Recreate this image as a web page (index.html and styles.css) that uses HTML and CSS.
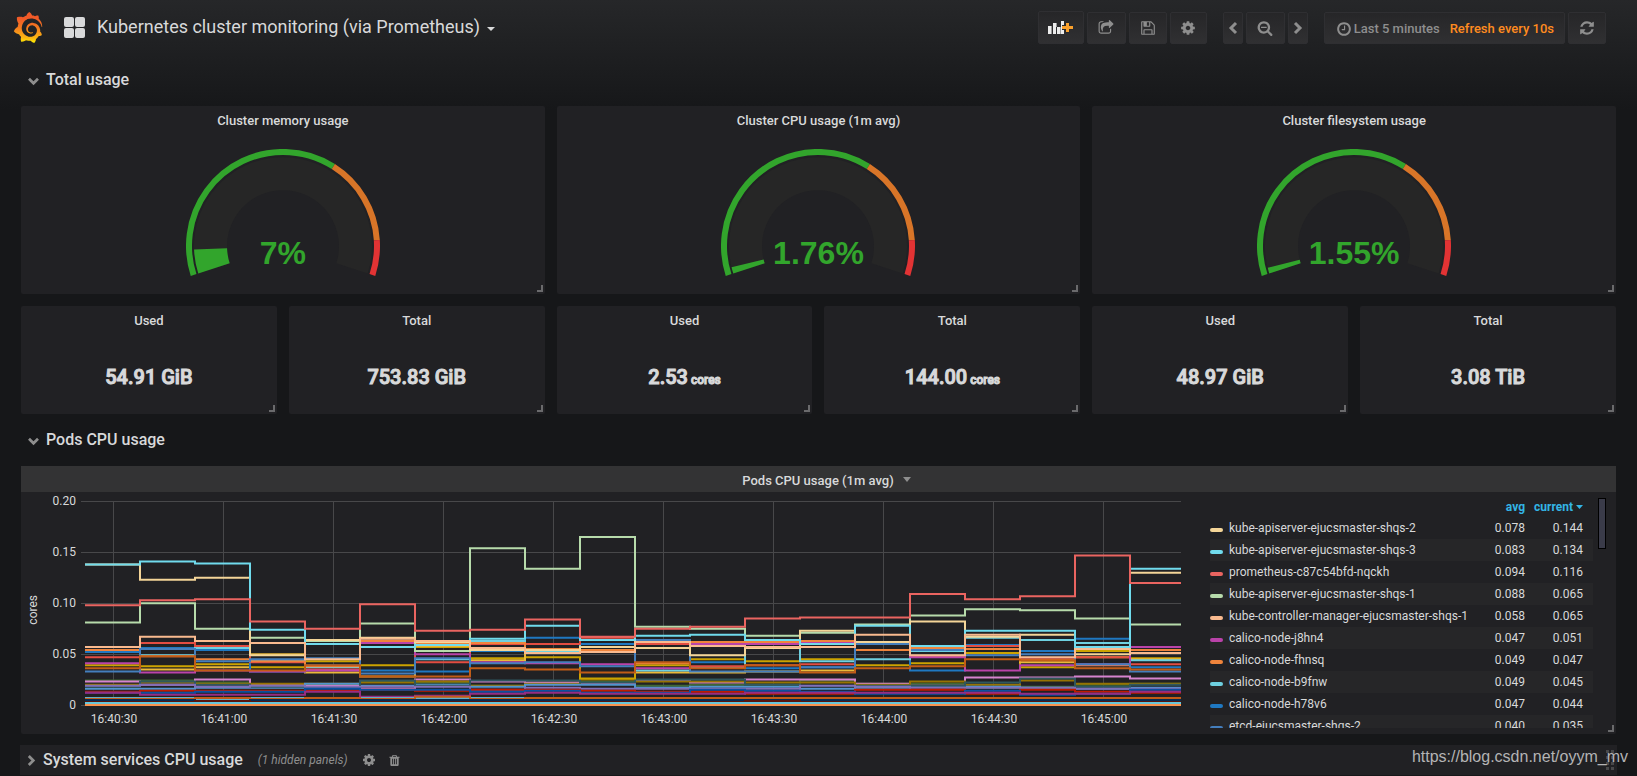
FILE: index.html
```html
<!DOCTYPE html>
<html lang="en">
<head>
<meta charset="utf-8">
<title>Kubernetes cluster monitoring (via Prometheus)</title>
<link rel="stylesheet" href="styles.css">
</head>
<body>
<svg class="sprite" aria-hidden="true">
  <symbol id="cog" viewBox="0 0 1792 1792"><path d="M1152 896q0-106-75-181t-181-75-181 75-75 181 75 181 181 75 181-75 75-181zm512-109v222q0 12-8 23t-20 13l-185 28q-19 54-39 91 35 50 107 138 10 12 10 25t-9 23q-27 37-99 108t-94 71q-12 0-26-9l-138-108q-44 23-91 38-16 136-29 186-7 28-36 28h-222q-14 0-24.5-8.5t-11.5-21.5l-28-184q-49-16-90-37l-141 107q-10 9-25 9-14 0-25-11-126-114-165-168-7-10-7-23 0-12 8-23 15-21 51-66.5t54-70.5q-27-50-41-99l-183-27q-13-2-21-12.5t-8-23.5v-222q0-12 8-23t19-13l186-28q14-46 39-92-40-57-107-138-10-12-10-24 0-10 9-23 26-36 98.5-107.5t94.5-71.5q13 0 26 10l138 107q44-23 91-38 16-136 29-186 7-28 36-28h222q14 0 24.5 8.5t11.5 21.5l28 184q49 16 90 37l142-107q9-9 24-9 13 0 25 10 129 119 165 170 7 8 7 22 0 12-8 23-15 21-51 66.5t-54 70.5q26 50 41 98l183 28q13 2 21 12.5t8 23.5z"/></symbol>
  <symbol id="chevron" viewBox="0 0 10 14"><path d="M2 2l5 5-5 5" fill="none" stroke="currentColor" stroke-width="3"/></symbol>
  <symbol id="handle" viewBox="0 0 6 7"><path d="M4 0h2v7H0V5h4z"/></symbol>
</svg>

<header class="navbar">
  <a class="logo" href="#" aria-label="Grafana home">
    <svg viewBox="0 0 351 365" width="30" height="31">
      <defs><linearGradient id="flame" x1="0" y1="1" x2="0" y2="0"><stop offset="0" stop-color="#fff100"/><stop offset=".15" stop-color="#fbb911"/><stop offset=".5" stop-color="#f47a20"/><stop offset=".8" stop-color="#f05a28"/></linearGradient></defs>
      <path fill="url(#flame)" d="M342,161.2c-0.6-6.1-1.6-13.1-3.6-20.9c-2-7.7-5-16.2-9.4-25c-4.4-8.8-10.1-17.9-17.5-26.8c-2.9-3.5-6.1-6.9-9.5-10.2c5.1-20.3-6.2-37.9-6.2-37.9c-19.5-1.2-31.9,6.1-36.5,9.4c-0.8-0.3-1.5-0.7-2.3-1c-3.3-1.3-6.7-2.6-10.3-3.7c-3.5-1.1-7.1-2.1-10.8-3c-3.7-0.9-7.4-1.6-11.2-2.2c-0.7-0.1-1.3-0.2-2-0.3c-8.5-27.2-32.9-38.6-32.9-38.6c-27.3,17.3-32.4,41.5-32.4,41.5s-0.1,0.5-0.3,1.4c-1.5,0.4-3,0.9-4.5,1.3c-2.1,0.6-4.2,1.4-6.2,2.2c-2.1,0.8-4.1,1.6-6.2,2.5c-4.1,1.8-8.2,3.8-12.2,6c-3.9,2.2-7.7,4.6-11.4,7.1c-0.5-0.2-1-0.4-1-0.4c-37.8-14.4-71.3,2.9-71.3,2.9c-3.1,40.2,15.1,65.5,18.7,70.1c-0.9,2.5-1.7,5-2.5,7.5c-2.8,9.1-4.9,18.4-6.2,28.1c-0.2,1.4-0.4,2.8-0.5,4.2C18.8,192.7,8.5,228,8.5,228c29.1,33.5,63.1,35.6,63.1,35.6c0,0,0.1-0.1,0.1-0.1c4.3,7.7,9.3,15,14.9,21.9c2.4,2.9,4.8,5.6,7.4,8.3c-10.6,30.4,1.5,55.6,1.5,55.6c32.4,1.2,53.7-14.2,58.2-17.7c3.2,1.1,6.5,2.1,9.8,2.9c10,2.6,20.2,4.1,30.4,4.5c2.5,0.1,5.1,0.2,7.6,0.1l1.2,0l0.8,0l1.6,0l1.6-0.1l0,0.1c15.3,21.8,42.1,24.9,42.1,24.9c19.1-20.1,20.2-40.1,20.2-44.4l0,0c0,0,0-0.1,0-0.3c0-0.4,0-0.6,0-0.6l0,0c0-0.3,0-0.6,0-0.9c4-2.8,7.8-5.8,11.4-9.1c7.6-6.9,14.3-14.8,19.9-23.3c0.5-0.8,1-1.6,1.5-2.4c21.6,1.2,36.9-13.4,36.9-13.4c-3.6-22.5-16.4-33.5-19.1-35.6l0,0c0,0-0.1-0.1-0.3-0.2c-0.2-0.1-0.2-0.2-0.2-0.2c-0.1-0.1-0.3-0.2-0.5-0.3c0.1-1.4,0.2-2.7,0.3-4.1c0.2-2.4,0.2-4.9,0.2-7.3l0-1.8l0-0.9l0-0.5l-0.1-2.1l-0.1-2c0-0.7-0.1-1.3-0.2-1.9c-0.1-0.6-0.1-1.3-0.2-1.9l-0.2-1.9l-0.3-1.9c-0.4-2.5-0.8-4.9-1.4-7.4c-2.3-9.7-6.1-18.9-11-27.2c-5-8.3-11.2-15.6-18.3-21.8c-7-6.2-14.9-11.2-23.1-14.9c-8.3-3.7-16.9-6.1-25.5-7.2c-4.3-0.6-8.6-0.8-12.9-0.7l-1.6,0l-1.6,0l-1.6,0.1c-0.6,0-1.2,0.1-1.7,0.1c-2.2,0.2-4.4,0.5-6.5,0.9c-8.6,1.6-16.7,4.7-23.8,9c-7.1,4.3-13.3,9.6-18.3,15.6c-5,6-8.9,12.7-11.6,19.6c-2.7,6.9-4.2,14.1-4.6,21c-0.1,1.7-0.1,3.5-0.1,5.2c0,0.4,0,0.9,0,1.3l0.1,1.4c0.1,0.8,0.1,1.7,0.2,2.5c0.3,3.5,1,6.9,1.9,10.1c1.9,6.5,4.9,12.4,8.6,17.4c3.7,5,8.2,9.1,12.9,12.4c4.7,3.2,9.8,5.5,14.8,7c5,1.5,10,2.1,14.7,2.1c0.6,0,1.2,0,1.7,0c0.3,0,0.6,0,0.9,0c0.3,0,0.6,0,0.9-0.1c0.5,0,1-0.1,1.5-0.1c0.1,0,0.3,0,0.4-0.1l0.5-0.1c0.3,0,0.6-0.1,0.9-0.1c0.6-0.1,1.1-0.2,1.7-0.3c0.6-0.1,1.1-0.2,1.6-0.4c1.1-0.2,2.1-0.6,3.1-0.9c2-0.7,4-1.5,5.7-2.4c1.8-0.9,3.4-2,5-3c0.4-0.3,0.9-0.6,1.3-1c1.6-1.3,1.9-3.7,0.6-5.3c-1.1-1.4-3.1-1.8-4.7-0.9c-0.4,0.2-0.8,0.4-1.2,0.6c-1.4,0.7-2.8,1.3-4.3,1.8c-1.5,0.5-3.1,0.9-4.7,1.2c-0.8,0.1-1.6,0.2-2.5,0.3c-0.4,0-0.8,0.1-1.3,0.1c-0.4,0-0.9,0-1.2,0c-0.4,0-0.8,0-1.2,0c-0.5,0-1,0-1.5-0.1l-0.6,0c-0.2,0-0.5,0-0.7-0.1c-0.5-0.1-0.9-0.1-1.4-0.2c-3.7-0.5-7.4-1.6-10.9-3.2c-3.6-1.6-7-3.8-10.1-6.6c-3.1-2.8-5.8-6.1-7.9-9.9c-2.1-3.8-3.6-8-4.3-12.4c-0.3-2.2-0.5-4.5-0.4-6.7c0-0.6,0.1-1.2,0.1-1.8l0-0.8c0-0.3,0.1-0.6,0.1-0.9c0.1-1.2,0.3-2.4,0.5-3.6c1.7-9.6,6.5-19,13.9-26.1c1.9-1.8,3.9-3.4,6-4.9c2.1-1.5,4.4-2.8,6.8-3.9c2.4-1.1,4.8-2,7.4-2.7c2.5-0.7,5.1-1.1,7.8-1.4c1.3-0.1,2.6-0.2,4-0.2l2.7,0l1.5,0.1c2.9,0.2,5.7,0.6,8.5,1.3c5.6,1.2,11.1,3.3,16.2,6.1c10.2,5.7,18.9,14.5,24.2,25.1c2.7,5.3,4.6,11,5.5,16.9c0.2,1.5,0.4,3,0.5,4.5l0.1,1.1l0.1,1.1c0,0.4,0,0.8,0,1.1c0,0.4,0,0.8,0,1.1l0,1l0,1.1c0,0.7-0.1,1.9-0.1,2.6c-0.1,1.6-0.3,3.3-0.5,4.9c-0.2,1.6-0.5,3.2-0.8,4.8c-0.3,1.6-0.7,3.2-1.1,4.7c-0.8,3.1-1.8,6.2-3,9.3c-2.4,6-5.6,11.8-9.4,17.1c-7.7,10.6-18.2,19.2-30.2,24.7c-6,2.7-12.3,4.7-18.8,5.7c-3.2,0.6-6.5,0.9-9.8,1l-5,0c-1.8,0-3.5-0.1-5.3-0.3c-7-0.5-13.9-1.8-20.7-3.7c-6.7-1.9-13.2-4.6-19.4-7.8c-12.3-6.6-23.4-15.6-32-26.5c-4.3-5.4-8.1-11.3-11.2-17.4c-3.1-6.1-5.6-12.6-7.4-19.1c-1.8-6.6-2.9-13.3-3.4-20.1l-0.1-1.3l0-5.8c0-0.8,0-1.7,0-2.5c0.1-3.3,0.4-6.8,0.8-10.2c0.4-3.4,1-6.9,1.7-10.3c0.7-3.4,1.5-6.8,2.5-10.2c1.9-6.7,4.3-13.2,7.1-19.3c5.7-12.2,13.1-23.1,22-31.8c2.2-2.2,4.5-4.2,6.9-6.2c2.4-1.9,4.9-3.7,7.5-5.4c2.5-1.7,5.2-3.2,7.9-4.6c1.3-0.7,2.7-1.4,4.1-2c1.4-0.6,2.8-1.2,4.2-1.8c2.8-1.2,5.7-2.2,8.7-3.1c1.5-0.5,2.9-0.9,4.4-1.3c1.5-0.4,3-0.8,4.5-1.1c1.5-0.4,3.1-0.7,4.6-1c1.5-0.3,3-0.6,4.6-0.8c0.8-0.1,1.5-0.2,2.3-0.3c1.7-0.2,3.5-0.5,5.2-0.6l3.8-0.4c0.9-0.1,1.7-0.1,2.6-0.2l2.3-0.1c0.7,0,1.5-0.1,2.2-0.1c2.9-0.1,5.9-0.1,8.8,0c5.8,0.2,11.5,0.9,17,1.9c11.1,2.1,21.5,5.6,31,10.3c9.5,4.6,17.9,10.3,25.3,16.5c3.6,3.1,7,6.4,10.2,9.7c3.1,3.3,6,6.6,8.6,10c5.2,6.7,9.4,13.5,12.7,19.9c1.6,3.2,3.1,6.3,4.4,9.4c1.2,3,2.4,5.9,3.3,8.6c1.5,4.4,2.6,8.3,3.5,11.7c0.3,1.4,1.6,2.3,3,2.1c1.5-0.1,2.6-1.3,2.6-2.8C342.6,170.4,342.5,166.1,342,161.2z"/>
    </svg>
  </a>
  <button class="dash-title" type="button">
    <svg width="21" height="21" viewBox="0 0 21 21" fill="#b3b3b3"><rect width="10" height="10" rx="2"/><rect x="11" width="10" height="10" rx="2"/><rect y="11" width="10" height="10" rx="2"/><rect x="11" y="11" width="10" height="10" rx="2"/></svg>
    <span>Kubernetes cluster monitoring (via Prometheus)</span>
    <svg class="caret" width="8" height="4" viewBox="0 0 8 4"><path d="M0 0h8L4 4z"/></svg>
  </button>
  <div class="tools">
    <div class="group">
      <button class="btn btn-add" type="button" aria-label="Add panel">
        <svg width="25" height="13" viewBox="0 0 25 13"><path fill="#ececec" d="M0 5h3v8H0zM5 2h3v11H5zM9 6h3v7H9zM13 0h3v13h-3z"/><path fill="#9b9b9c" d="M3 5h1v8H3zM8 2h1v4H8zM12 6h1v7h-1z"/><path d="M17 1h5v3h3v5h-3v3h-5V9h-3V4h3z" fill="#29292b"/><path d="M18 2h3v3h4v3h-4v3h-3V8h-4V5h4z" fill="#f9a02c"/></svg>
      </button>
      <button class="btn w39" type="button" aria-label="Share"><svg class="fa" viewBox="0 0 1792 1792"><path d="M1472 989v259q0 119-84.500 203.500t-203.500 84.500h-832q-119 0-203.500-84.500t-84.500-203.500v-832q0-119 84.500-203.500t203.500-84.500h255q13 0 22.500 9.500t9.500 22.500q0 27-26 32-77 26-133 60-10 4-16 4h-112q-66 0-113 47t-47 113v832q0 66 47 113t113 47h832q66 0 113-47t47-113v-214q0-19 18-29 28-13 54-37 16-16 35-8 21 9 21 29zm237-496l-384 384q-18 19-45 19-12 0-25-5-39-17-39-59v-192h-160q-323 0-438 131-119 137-74 473 3 23-20 34-8 2-12 2-16 0-26-13-10-14-21-31t-39.500-68.500-49.500-99.500-38.500-114-17.500-122q0-49 3.500-91t14-90 28-88 47-81.500 68.500-74 94.500-61.500 124.500-48.500 159.500-30.500 196.500-11h160v-192q0-42 39-59 13-5 25-5 26 0 45 19l384 384q19 19 19 45t-19 45z"/></svg></button>
      <button class="btn w38" type="button" aria-label="Save"><svg class="fa" viewBox="0 0 1792 1792"><path d="M512 1536h768v-384h-768v384zm896 0h128v-896q0-14-10-38.500t-20-34.500l-281-281q-10-10-34-20t-39-10v416q0 40-28 68t-68 28h-576q-40 0-68-28t-28-68v-416h-128v1280h128v-416q0-40 28-68t68-28h832q40 0 68 28t28 68v416zm-384-928v-320q0-13-9.500-22.500t-22.500-9.500h-192q-13 0-22.500 9.500t-9.500 22.500v320q0 13 9.500 22.500t22.500 9.500h192q13 0 22.500-9.500t9.500-22.500zm640 32v928q0 40-28 68t-68 28h-1344q-40 0-68-28t-28-68v-1344q0-40 28-68t68-28h928q40 0 88 20t76 48l280 280q28 28 48 76t20 88z"/></svg></button>
      <button class="btn w37" type="button" aria-label="Settings"><svg class="fa"><use href="#cog"/></svg></button>
    </div>
    <div class="group">
      <button class="btn w20" type="button" aria-label="Back"><svg class="flip" width="10" height="14"><use href="#chevron"/></svg></button>
      <button class="btn w39" type="button" aria-label="Zoom out"><svg class="fa" viewBox="0 0 1792 1792"><path d="M1088 800v64q0 13-9.500 22.500t-22.500 9.500h-576q-13 0-22.500-9.500t-9.500-22.500v-64q0-13 9.500-22.500t22.500-9.500h576q13 0 22.500 9.500t9.500 22.500zm128 32q0-185-131.500-316.500t-316.500-131.500-316.500 131.500-131.500 316.500 131.500 316.500 316.500 131.500 316.500-131.500 131.500-316.500zm512 832q0 53-37.500 90.500t-90.500 37.500q-54 0-90-38l-343-342q-179 124-399 124-143 0-273.500-55.500t-225-150-150-225-55.500-273.500 55.500-273.500 150-225 225-150 273.500-55.500 273.500 55.500 225 150 150 225 55.500 273.500q0 220-124 399l343 343q37 37 37 90z"/></svg></button>
      <button class="btn w20" type="button" aria-label="Forward"><svg width="10" height="14"><use href="#chevron"/></svg></button>
    </div>
    <div class="group">
      <button class="btn btn-time" type="button"><svg class="fa" viewBox="0 0 1792 1792"><path d="M1024 544v448q0 14-9 23t-23 9h-320q-14 0-23-9t-9-23v-64q0-14 9-23t23-9h224v-352q0-14 9-23t23-9h64q14 0 23 9t9 23zm416 352q0-148-73-273t-198-198-273-73-273 73-198 198-73 273 73 273 198 198 273 73 273-73 198-198 73-273zm224 0q0 209-103 385.500t-279.500 279.500-385.500 103-385.500-103-279.500-279.500-103-385.500 103-385.500 279.500-279.500 385.500-103 385.500 103 279.500 279.500 103 385.500z"/></svg><span>Last 5 minutes</span><span class="refresh">Refresh every 10s</span></button>
      <button class="btn w38" type="button" aria-label="Refresh"><svg class="fa" viewBox="0 0 1792 1792"><path d="M1639 1056q0 5-1 7-64 268-268 434.500t-478 166.500q-146 0-282.500-55t-243.500-157l-129 129q-19 19-45 19t-45-19-19-45v-448q0-26 19-45t45-19h448q26 0 45 19t19 45-19 45l-137 137q71 66 161 102t187 36q134 0 250-65t186-179q11-17 53-117 8-23 30-23h192q13 0 22.500 9.500t9.500 22.500zm25-800v448q0 26-19 45t-45 19h-448q-26 0-45-19t-19-45 19-45l138-138q-148-137-349-137-134 0-250 65t-186 179q-11 17-53 117-8 23-30 23h-199q-13 0-22.500-9.500t-9.500-22.500v-7q65-268 270-434.500t480-166.500q146 0 284 55.500t245 156.500l130-129q19-19 45-19t45 19 19 45z"/></svg></button>
    </div>
  </div>
</header>

<main class="dashboard">
  <h2 class="row-title"><svg class="down" width="9" height="13"><use href="#chevron"/></svg>Total usage</h2>

  <div class="gauges">
    <section class="panel gauge-panel">
      <h3 class="panel-title">Cluster memory usage</h3>
      <div class="gauge">
        <svg viewBox="0 0 194 129" width="194" height="129"><path class="track" d="M28 119.400A72.500 72.500 0 1 1 166 119.400"/><path class="fill" pathLength="100" stroke-dasharray="7.300 100" d="M28 119.400A72.500 72.500 0 1 1 166 119.400"/><path class="ring ok" pathLength="100" stroke-dasharray="65 100" d="M7.600 126A94 94 0 1 1 186.400 126"/><path class="ring warn" pathLength="100" stroke-dasharray="0 65 25 100" d="M7.600 126A94 94 0 1 1 186.400 126"/><path class="ring crit" pathLength="100" stroke-dasharray="0 90 10 100" d="M7.600 126A94 94 0 1 1 186.400 126"/></svg>
        <span class="gauge-value">7%</span>
      </div>
      <svg class="resize"><use href="#handle"/></svg>
    </section>
    <section class="panel gauge-panel">
      <h3 class="panel-title">Cluster CPU usage (1m avg)</h3>
      <div class="gauge">
        <svg viewBox="0 0 194 129" width="194" height="129"><path class="track" d="M28 119.400A72.500 72.500 0 1 1 166 119.400"/><path class="fill" pathLength="100" stroke-dasharray="2 100" d="M28 119.400A72.500 72.500 0 1 1 166 119.400"/><path class="ring ok" pathLength="100" stroke-dasharray="65 100" d="M7.600 126A94 94 0 1 1 186.400 126"/><path class="ring warn" pathLength="100" stroke-dasharray="0 65 25 100" d="M7.600 126A94 94 0 1 1 186.400 126"/><path class="ring crit" pathLength="100" stroke-dasharray="0 90 10 100" d="M7.600 126A94 94 0 1 1 186.400 126"/></svg>
        <span class="gauge-value">1.76%</span>
      </div>
      <svg class="resize"><use href="#handle"/></svg>
    </section>
    <section class="panel gauge-panel">
      <h3 class="panel-title">Cluster filesystem usage</h3>
      <div class="gauge">
        <svg viewBox="0 0 194 129" width="194" height="129"><path class="track" d="M28 119.400A72.500 72.500 0 1 1 166 119.400"/><path class="fill" pathLength="100" stroke-dasharray="1.800 100" d="M28 119.400A72.500 72.500 0 1 1 166 119.400"/><path class="ring ok" pathLength="100" stroke-dasharray="65 100" d="M7.600 126A94 94 0 1 1 186.400 126"/><path class="ring warn" pathLength="100" stroke-dasharray="0 65 25 100" d="M7.600 126A94 94 0 1 1 186.400 126"/><path class="ring crit" pathLength="100" stroke-dasharray="0 90 10 100" d="M7.600 126A94 94 0 1 1 186.400 126"/></svg>
        <span class="gauge-value">1.55%</span>
      </div>
      <svg class="resize"><use href="#handle"/></svg>
    </section>
  </div>

  <div class="stats">
    <section class="panel stat"><h3 class="panel-title">Used</h3><p class="stat-value">54.91 GiB</p><svg class="resize"><use href="#handle"/></svg></section>
    <section class="panel stat"><h3 class="panel-title">Total</h3><p class="stat-value">753.83 GiB</p><svg class="resize"><use href="#handle"/></svg></section>
    <section class="panel stat"><h3 class="panel-title">Used</h3><p class="stat-value">2.53<small> cores</small></p><svg class="resize"><use href="#handle"/></svg></section>
    <section class="panel stat"><h3 class="panel-title">Total</h3><p class="stat-value">144.00<small> cores</small></p><svg class="resize"><use href="#handle"/></svg></section>
    <section class="panel stat"><h3 class="panel-title">Used</h3><p class="stat-value">48.97 GiB</p><svg class="resize"><use href="#handle"/></svg></section>
    <section class="panel stat"><h3 class="panel-title">Total</h3><p class="stat-value">3.08 TiB</p><svg class="resize"><use href="#handle"/></svg></section>
  </div>

  <h2 class="row-title"><svg class="down" width="9" height="13"><use href="#chevron"/></svg>Pods CPU usage</h2>

  <section class="panel graph-panel">
    <h3 class="panel-title hovered">Pods CPU usage (1m avg)<svg width="8" height="5" viewBox="0 0 8 5"><path d="M0 0h8L4 5z"/></svg></h3>
    <div class="graph-body">
      <div class="axis-name"><span>cores</span></div>
      <div class="y-axis"><span>0.20</span><span>0.15</span><span>0.10</span><span>0.05</span><span>0</span></div>
      <div class="plot">
        <svg id="chart" viewBox="0 0 1100 206" preserveAspectRatio="none" role="img" aria-label="Pods CPU usage over time"></svg>
        <div class="x-axis"><span>16:40:30</span><span>16:41:00</span><span>16:41:30</span><span>16:42:00</span><span>16:42:30</span><span>16:43:00</span><span>16:43:30</span><span>16:44:00</span><span>16:44:30</span><span>16:45:00</span></div>
      </div>
      <div class="legend">
        <table>
          <thead><tr><th></th><th><a href="#">avg</a></th><th><a href="#">current<svg width="7" height="4" viewBox="0 0 7 4"><path d="M0 0h7L3.500 4z"/></svg></a></th></tr></thead>
          <tbody>
            <tr><td><i class="swatch c1"></i>kube-apiserver-ejucsmaster-shqs-2</td><td>0.078</td><td>0.144</td></tr>
            <tr><td><i class="swatch c2"></i>kube-apiserver-ejucsmaster-shqs-3</td><td>0.083</td><td>0.134</td></tr>
            <tr><td><i class="swatch c3"></i>prometheus-c87c54bfd-nqckh</td><td>0.094</td><td>0.116</td></tr>
            <tr><td><i class="swatch c4"></i>kube-apiserver-ejucsmaster-shqs-1</td><td>0.088</td><td>0.065</td></tr>
            <tr><td><i class="swatch c5"></i>kube-controller-manager-ejucsmaster-shqs-1</td><td>0.058</td><td>0.065</td></tr>
            <tr><td><i class="swatch c6"></i>calico-node-j8hn4</td><td>0.047</td><td>0.051</td></tr>
            <tr><td><i class="swatch c7"></i>calico-node-fhnsq</td><td>0.049</td><td>0.047</td></tr>
            <tr><td><i class="swatch c8"></i>calico-node-b9fnw</td><td>0.049</td><td>0.045</td></tr>
            <tr><td><i class="swatch c9"></i>calico-node-h78v6</td><td>0.047</td><td>0.044</td></tr>
            <tr><td><i class="swatch c10"></i>etcd-ejucsmaster-shqs-2</td><td>0.040</td><td>0.035</td></tr>
          </tbody>
        </table>
        <div class="scrollbar"></div>
      </div>
    </div>
    <svg class="resize"><use href="#handle"/></svg>
  </section>

  <div class="collapsed-row">
    <h2><svg width="9" height="13"><use href="#chevron"/></svg>System services CPU usage</h2>
    <span class="hidden-count">(1 hidden panels)</span>
    <button type="button" aria-label="Row settings"><svg width="14" height="14"><use href="#cog"/></svg></button>
    <button type="button" aria-label="Delete row"><svg width="13" height="13" viewBox="0 0 1792 1792"><path d="M704 1376v-704q0-14-9-23t-23-9h-64q-14 0-23 9t-9 23v704q0 14 9 23t23 9h64q14 0 23-9t9-23zm256 0v-704q0-14-9-23t-23-9h-64q-14 0-23 9t-9 23v704q0 14 9 23t23 9h64q14 0 23-9t9-23zm256 0v-704q0-14-9-23t-23-9h-64q-14 0-23 9t-9 23v704q0 14 9 23t23 9h64q14 0 23-9t9-23zm-544-992h448l-48-117q-7-9-17-11h-317q-10 2-17 11zm928 32v64q0 14-9 23t-23 9h-96v948q0 83-47 143.500t-113 60.500h-832q-66 0-113-58.500t-47-141.500v-952h-96q-14 0-23-9t-9-23v-64q0-14 9-23t23-9h309l70-167q15-37 54-63t79-26h320q40 0 79 26t54 63l70 167h309q14 0 23 9t9 23z"/></svg></button>
    <svg class="drag" width="8" height="20" viewBox="0 0 8 20"><path d="M0 0h3v3H0zM5 0h3v3H5zM0 6h3v3H0zM5 6h3v3H5zM0 12h3v3H0zM5 12h3v3H5zM0 17h3v3H0zM5 17h3v3H5z"/></svg>
  </div>
</main>
<div class="watermark">https://blog.csdn.net/oyym_mv</div>
<script src="chart.js"></script>
</body>
</html>
```
FILE: styles.css
```css
* { box-sizing: border-box; }

body {
  margin: 0;
  min-height: 100vh;
  overflow-x: hidden;
  background: #161719 linear-gradient(#262729, #161719 110px) no-repeat;
  color: #d8d9da;
  font: 13px/20px Roboto, "Liberation Sans", sans-serif;
}

h2, h3, p { margin: 0; font-weight: 500; }
svg { display: block; fill: currentColor; }
button { border: 0; padding: 0; background: none; color: inherit; font: inherit; }
.sprite { position: absolute; width: 0; height: 0; }

.navbar {
  display: flex;
  align-items: center;
  height: 54px;
  padding: 0 31px 0 13px;
}
.dash-title {
  display: flex;
  align-items: center;
  gap: 12px;
  margin-left: 21px;
  font-size: 18px;
  white-space: nowrap;
}
.caret { margin: 3px 0 0 -5px; }

.tools { display: flex; gap: 16px; margin: 1px 0 0 auto; }
.group { display: flex; align-items: flex-end; gap: 3px; }
.btn {
  display: flex;
  align-items: center;
  justify-content: center;
  height: 32px;
  border: 1px solid #2f2f32;
  border-radius: 2px;
  background: linear-gradient(#262628, #303032);
  color: #8e8e8e;
}
.btn-add { width: 46px; height: 33px; }
.w20 { width: 20px; }
.w37 { width: 37px; }
.w38 { width: 38px; }
.w39 { width: 39px; }
.fa { width: 16px; height: 16px; }
.flip { transform: rotate(180deg); }
.btn-time { padding: 2px 10px 0 11px; gap: 2px; font-weight: 500; white-space: nowrap; }
.refresh { margin-left: 8px; color: #ff8b1f; }

.dashboard { padding: 0 21px; }
.row-title {
  display: flex;
  align-items: center;
  gap: 8px;
  height: 52px;
  padding-left: 8px;
  font-size: 16px;
}
.row-title svg { color: #8e8e8e; }
.down { margin-top: 2px; transform: rotate(90deg); }

.panel {
  position: relative;
  border-radius: 2px;
  background: #212124;
}
.panel-title {
  height: 30px;
  font-size: 13px;
  line-height: 30px;
  text-align: center;
}
.resize {
  position: absolute;
  right: 2px;
  bottom: 2px;
  width: 6px;
  height: 7px;
  color: #6a6a6c;
}

.gauges { display: grid; grid-template-columns: repeat(3, 1fr); gap: 12px; }
.gauge-panel { height: 188px; }
.gauge { display: grid; justify-content: center; padding-top: 13px; }
.gauge > * { grid-area: 1 / 1; }
.gauge path { fill: none; }
.gauge .track { stroke: #262626; stroke-width: 33px; }
.gauge .fill { stroke: #32a52c; stroke-width: 33px; }
.ring { stroke-width: 6px; }
.ok { stroke: #32a52c; }
.warn { stroke: #d87528; }
.crit { stroke: #e23334; }
.gauge-value {
  align-self: end;
  padding-bottom: 7px;
  color: #32a52c;
  font: bold 32px/36px "Liberation Sans", Arial, sans-serif;
  text-align: center;
}

.stats { display: grid; grid-template-columns: repeat(6, 1fr); gap: 12px; margin-top: 12px; }
.stat { height: 108px; }
.stat-value {
  padding-top: 27px;
  font-size: 20px;
  line-height: 28px;
  text-align: center;
  -webkit-text-stroke: 1px currentColor;
}
.stat-value small { font-size: 12px; }

.hovered {
  display: flex;
  align-items: center;
  justify-content: center;
  gap: 9px;
  height: 26px;
  padding: 3px 0 0 16px;
  background: #333334;
}
.hovered svg { margin-bottom: 3px; color: #8e8e8e; }
.graph-body {
  display: grid;
  grid-template-columns: 18px 33px minmax(0, 1fr) 406px;
  height: 242px;
  padding: 1px 0 0 4px;
  font-size: 12px;
  line-height: 16px;
}
.axis-name { display: flex; align-items: center; height: 234px; }
.axis-name span { writing-mode: vertical-rl; transform: rotate(180deg); }
.y-axis { display: flex; flex-direction: column; justify-content: space-between; height: 220px; text-align: right; }
.plot { margin: 8px 29px 0 5px; }
#chart { width: 100%; height: 206px; }
#chart path { fill: none; vector-effect: non-scaling-stroke; }
#chart .grid { stroke: #48484a; stroke-width: 1px; shape-rendering: crispEdges; }
#chart .line { stroke-width: 2px; }
.x-axis { display: grid; grid-template-columns: repeat(10, 10%); margin: 4px 2% 0 -2%; text-align: center; }

.legend {
  display: flex;
  align-items: flex-start;
  gap: 5px;
  height: 235px;
  padding: 3px 10px 0 0;
  overflow: hidden;
}
.legend table { flex: 1; border-collapse: collapse; }
.legend th, .legend td { height: 22px; padding: 0; font-weight: 400; text-align: right; }
.legend th { height: 21px; font-weight: 700; }
.legend td:first-child { text-align: left; white-space: nowrap; }
.legend th:nth-child(2), .legend td:nth-child(2) { width: 60px; }
.legend th:last-child, .legend td:last-child { width: 69px; padding-right: 10px; }
.legend tbody tr:nth-child(even) { background: #262628; }
.legend a { display: flex; align-items: center; justify-content: flex-end; gap: 3px; color: #33b5e5; text-decoration: none; }
.swatch { display: inline-block; width: 13px; height: 4px; margin-right: 6px; border-radius: 2px; }
.c1 { background: #f4d598; }
.c2 { background: #70dbed; }
.c3 { background: #ea6460; }
.c4 { background: #b7dbab; }
.c5 { background: #f9ba8f; }
.c6 { background: #ba43a9; }
.c7 { background: #ef843c; }
.c8 { background: #6ed0e0; }
.c9 { background: #1f78c1; }
.c10 { background: #447ebc; }
.scrollbar { width: 8px; height: 51px; margin-top: 2px; border: 1px solid #000; background: #3a3b49; }

.collapsed-row {
  display: flex;
  align-items: center;
  height: 30px;
  margin: 11px -1px 0;
  padding: 0 3px 0 7px;
  background: #212124;
  color: #8e8e8e;
}
.collapsed-row h2 { display: flex; align-items: center; gap: 7px; color: #d8d9da; font-size: 16px; }
.collapsed-row h2 svg { color: #8e8e8e; }
.hidden-count { margin: 0 14px 0 15px; font-size: 12px; font-style: italic; }
.collapsed-row button { margin-right: 12px; }
.drag { margin-left: auto; color: #48484a; }

.watermark {
  position: absolute;
  top: 747px;
  right: 9px;
  color: #b4b4b5;
  font: 16px/20px "Liberation Sans", Arial, sans-serif;
}
```
FILE: chart.js
```js
// Values in millicores, one per 15 s step.
const series = [
  ["#3f6833", [24,24,22,20,20,23,22,19,21,23,19,20,20,24,21,21,17,18,20,21]],
  ["#d683ce", [23,20,25,20,19,16,25,23,22,21,24,22,25,25,21,19,27,27,28,26]],
  ["#967302", [20,22,21,21,21,22,23,19,21,25,23,23,22,22,20,23,20,24,21,21]],
  ["#5195ce", [16,16,17,17,21,19,20,18,20,20,17,18,18,16,17,18,18,17,16,17]],
  ["#2f575e", [18,23,20,18,17,24,19,24,24,22,25,25,20,19,19,19,22,26,18,20]],
  ["#806eb7", [19,20,18,19,18,18,18,15,17,16,16,16,16,19,18,17,17,17,16,16]],
  ["#bf1b00", [13,14,14,14,14,15,14,15,15,14,13,13,11,11,15,15,11,15,13,12]],
  ["#0a50a1", [12,12,13,13,16,15,15,13,14,12,12,15,14,13,11,11,14,10,11,15]],
  ["#962d82", [12,10,10,10,13,8,9,11,12,11,11,11,12,12,12,12,12,11,11,13]],
  ["#64b0c8", [7,7,6,7,6,7,7,7,6,7,7,6,7,6,7,6,7,6,7,6]],
  ["#c15c17", [6,6,7,6,7,6,8,6,7,7,7,7,7,7,7,7,7,7,7,7]],
  ["#052b51", [5,5,4,5,5,5,5,5,5,5,5,5,5,5,5,5,5,5,5,5]],
  ["#58140c", [3,3,4,3,3,3,3,3,3,3,3,3,4,3,3,3,3,3,3,3]],
  ["#65c5db", [2,2,2,2,2,2,2,2,2,2,2,2,2,2,2,2,2,2,2,2]],
  ["#cca300", [39,38,40,37,43,39,57,46,47,26,39,45,43,45,39,41,51,37,53,46]],
  ["#eab839", [53,35,37,50,32,28,58,44,54,53,32,32,33,34,62,56,55,42,47,45]],
  ["#1f78c1", [52,56,54,33,39,34,33,53,66,60,62,42,36,37,61,34,59,53,65,37]],
  ["#6ed0e0", [54,49,56,44,37,57,45,63,52,64,34,37,64,43,45,53,66,64,61,44]],
  ["#e24d42", [47,61,58,42,35,61,42,60,60,66,60,38,39,40,62,48,58,45,47,40]],
  ["#ef843c", [54,48,45,43,38,63,61,61,55,54,41,62,62,63,54,56,55,44,39,54]],
  ["#ba43a9", [41,32,34,33,34,61,50,42,41,40,36,60,60,61,61,47,34,39,40,57]],
  ["#447ebc", [33,55,43,45,46,31,46,41,42,38,64,33,33,37,60,54,49,50,40,33]],
  ["#c15c17", [36,48,34,34,39,28,28,36,35,32,42,36,39,32,36,38,45,44,36,35]],
  ["#b7dbab", [81,100,75,66,63,80,53,154,134,165,77,75,68,71,79,88,94,93,85,79]],
  ["#f4d598", [138,123,125,49,64,66,62,54,54,57,56,49,56,73,62,82,67,69,50,130]],
  ["#70dbed", [138,141,139,74,60,57,59,65,78,64,68,69,64,60,78,58,73,73,57,134]],
  ["#ea6460", [98,103,104,82,75,99,73,74,84,67,75,77,85,86,86,109,104,107,147,120]],
  ["#f9ba8f", [57,67,63,61,45,65,63,56,51,52,62,58,57,57,69,49,69,47,55,51]],
  ["#f9934e", [0,0,0,0,0,0,0,0,0,0,0,0,0,0,0,0,0,0,0,0]]
];

const chart = document.getElementById("chart");
const START = 4, STEP = 55, END = 1100;
const y = v => 204 - v * 1.0175;

function addPath(cls, d, color) {
  const p = document.createElementNS("http://www.w3.org/2000/svg", "path");
  p.setAttribute("class", cls);
  p.setAttribute("d", d);
  if (color) p.setAttribute("stroke", color);
  chart.appendChild(p);
}

for (let v = 0; v <= 200; v += 50) addPath("grid", `M0 ${y(v)}H${END}`);
for (let x = 32.5; x < END; x += 110) addPath("grid", `M${x} 0V205`);

for (const [color, values] of series) {
  let d = "";
  values.forEach((v, i) => {
    d += i ? `V${y(v)}` : `M${START} ${y(v)}`;
    d += `H${Math.min(START + STEP * (i + 1), END)}`;
  });
  addPath("line", d, color);
}
```
